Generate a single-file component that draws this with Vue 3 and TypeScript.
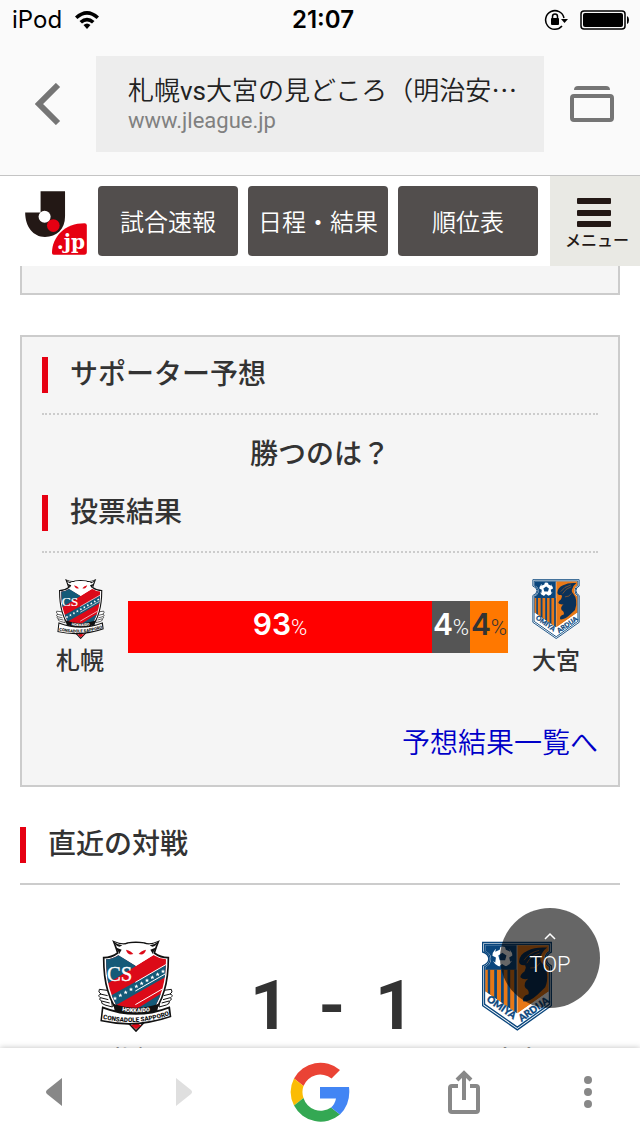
<script setup lang="ts">
interface Share {
  key: string
  value: number
  span: number
}

const navItems: string[] = ['試合速報', '日程・結果', '順位表']

const shares: Share[] = [
  { key: 'home', value: 93, span: 80 },
  { key: 'draw', value: 4, span: 10 },
  { key: 'away', value: 4, span: 10 },
]

const stars: number[] = [0, 1, 2, 3, 4, 5, 6, 7, 8, 9]
</script>

<template>
  <div class="screen" lang="ja">
    <header class="browser">
      <div class="status">
        <div class="carrier">
          <span>iPod</span>
          <svg width="26" height="20" viewBox="0 0 26 20" aria-hidden="true">
            <path d="M1 6.500 Q13 -4.500 25 6.500 L22.600 9 Q13 0.500 3.400 9Z M5.500 11 Q13 4.500 20.500 11 L18 13.500 Q13 9.500 8 13.500Z M9.500 15 Q13 12 16.500 15 L13 19Z" />
          </svg>
        </div>
        <time>21:07</time>
        <div class="indicators">
          <svg width="24" height="22" viewBox="0 0 24 22" aria-hidden="true">
            <path d="M20 9 A9.300 9.300 0 1 0 18 17" fill="none" stroke="#000" stroke-width="1.500" />
            <path d="M17 10 H24 L20.500 14Z" />
            <rect x="7" y="9" width="8" height="7" rx="1" />
            <path d="M8.500 10 V7.500 a2.500 2.500 0 0 1 5 0 V10" fill="none" stroke="#000" stroke-width="1.500" />
          </svg>
          <svg width="50" height="20" viewBox="0 0 50 20" aria-hidden="true">
            <rect x="1" y="1" width="44" height="18" rx="3" fill="none" stroke="#000" stroke-width="1.500" />
            <rect x="3" y="3" width="40" height="14" rx="2" />
            <path d="M47 6 Q49 7 49 10 Q49 13 47 14Z" />
          </svg>
        </div>
      </div>
      <div class="toolbar">
        <button type="button" class="plain" aria-label="戻る">
          <svg width="26" height="42" viewBox="0 0 26 42"><path d="M23 2 L4 21 L23 40" fill="none" stroke="#757575" stroke-width="6" /></svg>
        </button>
        <button type="button" class="address">
          <span class="page-title">札幌<span class="latin">vs</span>大宮の見どころ（明治安<span class="more">…</span></span>
          <span class="host">www.jleague.jp</span>
        </button>
        <button type="button" class="plain" aria-label="タブ一覧">
          <svg width="44" height="36" viewBox="0 0 44 36"><path d="M4 4 Q4 0 8 0 H36 Q40 0 40 4Z" fill="#757575" /><rect x="2" y="10" width="40" height="24" rx="2" fill="none" stroke="#757575" stroke-width="4" /></svg>
        </button>
      </div>
    </header>

    <nav class="site-nav">
      <a href="#" class="logo" aria-label="Jリーグ.jp">
        <svg width="64" height="66" viewBox="73 63 190 197">
          <path d="M122 67 H195 V142 C195 180 170 203 135 203 C100 203 76 172 76 130 H122Z" fill="#231815" />
          <circle cx="160" cy="169" r="19" fill="#e60012" />
          <circle cx="134" cy="143" r="18" fill="#fff" />
          <path d="M156 251 C156 202 195 162 253 162 Q260 162 260 169 V248 Q260 256 252 256 H161 Q156 256 156 251Z" fill="#e60012" stroke="#fff" stroke-width="6" paint-order="stroke" />
          <text x="170" y="239" font-family="DejaVu Serif, serif" font-size="60" font-weight="700" fill="#fff">.jp</text>
        </svg>
      </a>
      <a v-for="item in navItems" :key="item" href="#" class="nav-button">{{ item }}</a>
      <button type="button" class="menu">
        <svg width="36" height="30" viewBox="0 0 36 30" aria-hidden="true">
          <g fill="#231815"><rect x="0" y="0" width="34" height="6" rx="1" /><rect x="0" y="12" width="34" height="6" rx="1" /><rect x="0" y="23" width="34" height="6" rx="1" /></g>
        </svg>
        <span>メニュー</span>
      </button>
    </nav>

    <main class="content">
      <div class="panel panel-end"></div>
      <section class="panel prediction">
        <h2 class="heading">サポーター予想</h2>
        <p class="question">勝つのは？</p>
        <h2 class="heading">投票結果</h2>
        <div class="vote">
          <div class="side">
            <svg class="crest-small sapporo" viewBox="52 61 224 276" role="img" aria-label="札幌">
              <g id="crest-sapporo">
                <g fill="#fff" stroke="#111" stroke-width="3" stroke-linejoin="round">
                  <path d="M80 212 L57 209 Q52 218 62 223 Q50 226 60 234 Q54 240 64 244 Q60 252 74 256 L96 262 L90 214Z" />
                  <path d="M250 212 L273 209 Q279 218 269 223 Q281 226 271 234 Q277 240 267 244 Q270 252 258 256 L236 262 L242 214Z" />
                  <path d="M60 223 L82 228 M60 234 L84 240 M64 244 L88 250 M270 223 L250 228 M270 234 L248 240 M266 244 L244 250" fill="none" />
                </g>
                <path d="M70 114 Q94 114 112 100 L107 84 L100 66 Q128 78 142 70 Q166 66 192 70 Q208 78 234 66 L227 84 L222 100 Q240 114 264 114 Q264 172 252 212 Q238 262 210 288 L167 334 L126 290 Q96 262 82 212 Q70 172 70 114Z" fill="#fff" stroke="#111" stroke-width="5" />
                <clipPath id="sapporo-shield">
                  <path d="M77 119 Q98 118 115 106 L167 139 L219 106 Q238 118 257 119 Q257 170 246 208 Q232 258 205 284 L167 326 L130 286 Q102 258 88 208 Q77 170 77 119Z" />
                </clipPath>
                <g clip-path="url(#sapporo-shield)">
                  <path d="M70 90 H270 V340 H70Z" fill="#dc0a18" />
                  <path d="M70 90 H140 L167 139 L70 199Z" fill="#145a78" />
                  <path d="M70 240 L270 129 V164 L96 263Z" fill="#145a78" />
                  <path d="M150 280 L270 204 V300 H180Z" fill="#145a78" />
                  <path d="M165 188 L270 127 M165 214 L270 154 M165 255 L270 194" stroke="#fff" stroke-width="3" fill="none" />
                </g>
                <g fill="#fff">
                  <path v-for="n in stars" :key="n" :transform="`translate(${104 + n * 16} ${236 - n * 9})`" d="M0 -6 L2 -2 L6 -2 L3 1 L4 6 L0 3 L-4 6 L-3 1 L-6 -2 L-2 -2Z" />
                </g>
                <path d="M102 67 L119 82 L109 84 L123 93 Q116 98 115 107 L167 138 L219 107 Q218 98 211 93 L225 84 L215 82 L232 67 Q206 79 192 72 Q167 68 142 72 Q128 79 102 67Z" fill="#fff" />
                <path d="M101 66 Q112 76 126 77 L118 81 Q106 79 101 66Z M233 66 Q222 76 208 77 L216 81 Q228 79 233 66Z M103 82 L124 90 L116 104 Q117 96 103 82Z M231 82 L210 90 L218 104 Q217 96 231 82Z" fill="#111" />
                <path d="M137 90 Q153 94 159 103 Q142 109 137 90Z M197 90 Q181 94 175 103 Q192 109 197 90Z" fill="#dc0a18" />
                <path d="M151 316 L184 316 L167 329Z" fill="#dc0a18" />
                <text x="80" y="185" font-family="Liberation Serif, serif" font-size="62" fill="#fff" stroke="#fff" stroke-width="1">CS</text>
                <path d="M99 252 Q167 276 235 252 L231 273 Q167 294 103 273Z" fill="#111" />
                <path id="sapporo-upper" d="M104 269 Q167 287 230 269" fill="none" />
                <text font-family="Roboto, sans-serif" font-size="17" font-weight="900" fill="#fff" text-anchor="middle"><textPath href="#sapporo-upper" startOffset="50%">HOKKAIDO</textPath></text>
                <path d="M65 260 Q167 300 269 260 L273 292 Q167 330 60 305Z" fill="#111" />
                <path d="M69 267 Q167 304 264 267 L268 289 Q167 323 65 301Z" fill="#fff" />
                <path id="sapporo-lower" d="M66 297 Q167 322 269 286" fill="none" />
                <text font-family="Roboto, sans-serif" font-size="19" font-weight="900" fill="#111" text-anchor="middle"><textPath href="#sapporo-lower" startOffset="50%">CONSADOLE SAPPORO</textPath></text>
              </g>
            </svg>
            <span>札幌</span>
          </div>
          <div class="bar">
            <div v-for="share in shares" :key="share.key" :class="['share', share.key]" :style="{ width: share.span + '%' }">
              <b>{{ share.value }}</b><small>%</small>
            </div>
          </div>
          <div class="side">
            <svg class="crest-small omiya" viewBox="68 133 206 262" role="img" aria-label="大宮">
              <g id="crest-omiya">
                <path d="M70 136 H272 V164 Q258 170 258 184 Q258 198 272 205 V322 L172 393 L70 322 V205 Q88 198 88 184 Q88 170 70 164Z" fill="#fff" stroke="#0a467d" stroke-width="4" />
                <path d="M76 142 H266 V162 Q254 169 254 184 Q254 200 266 207 V318 L172 385 L76 318 V207 Q92 200 92 184 Q92 169 76 162Z" fill="#fff" stroke="#0a467d" stroke-width="4" />
                <path d="M78 144 H170 V345 L78 280 V209 Q95 200 95 184 Q95 169 78 161Z" fill="#0a467d" />
                <path d="M172 144 H264 V161 Q251 169 251 184 Q251 200 264 209 V280 L172 345Z" fill="#e87817" />
                <path d="M78 216 H170 V345 L78 280Z" fill="#e87817" />
                <path d="M85 216 h7 v74 l-7 -5Z M104 216 h8 v88 l-8 -6Z M124 216 h8 v102 l-8 -6Z M143 216 h8 v116 l-8 -6Z M163 216 h7 v129 l-7 -5Z" fill="#0a467d" />
                <path d="M260 151 Q226 148 202 160 Q178 170 177 192 Q178 205 195 203 L197 210 L193 221 Q180 230 181 238 Q188 246 204 243 Q188 256 196 270 Q208 277 205 288 Q185 293 189 309 Q207 312 232 289 L254 268 Q262 250 259 227 Q256 208 247 199 Q238 191 240 181 Q243 164 260 151Z" fill="#0a3159" />
                <path d="M192 188 Q206 166 236 159 M200 197 Q212 174 238 167 M210 211 Q230 212 238 196" fill="none" stroke="#e87817" stroke-width="2" />
                <circle cx="128" cy="178" r="30" fill="#fff" />
                <path d="M128 166 L140 174 L136 188 L120 188 L116 174Z M110 149 L123 146 L120 157 L107 163Z M135 146 L148 152 L151 163 L138 157Z M160 173 L161 187 L151 193 L148 180Z M140 207 L129 212 L119 206 L127 199Z M97 174 L109 180 L107 195 L96 188Z" fill="#0a467d" />
                <path d="M78 280 L172 345 L264 280 V315 L172 380 L78 315Z" fill="#fff" />
                <g font-family="Lato, sans-serif" font-size="29" font-weight="900" fill="#0a467d" stroke="#0a467d" stroke-width="1">
                  <text transform="translate(80 307) rotate(35)">OMIYA</text>
                  <text transform="translate(184 370) rotate(-35)">ARDIJA</text>
                </g>
              </g>
            </svg>
            <span>大宮</span>
          </div>
        </div>
        <a href="#" class="list-link">予想結果一覧へ</a>
      </section>

      <section class="recent">
        <h2 class="heading">直近の対戦</h2>
        <div class="match">
          <div class="club">
            <svg class="crest-large sapporo" viewBox="52 61 224 276" role="img" aria-label="札幌"><use href="#crest-sapporo" /></svg>
            <span>札幌</span>
          </div>
          <div class="score"><span>1</span><span>-</span><span>1</span></div>
          <div class="club">
            <svg class="crest-large omiya" viewBox="68 133 206 262" role="img" aria-label="大宮"><use href="#crest-omiya" /></svg>
            <span>大宮</span>
          </div>
        </div>
      </section>

      <a href="#" class="to-top">
        <svg width="12" height="8" viewBox="0 0 12 8" aria-hidden="true"><path d="M1 7 L6 2 L11 7" fill="none" stroke="#fff" stroke-width="1.500" /></svg>
        <span>TOP</span>
      </a>
    </main>

    <footer class="bottom">
      <button type="button" class="plain" aria-label="前のページ">
        <svg width="16" height="28" viewBox="0 0 16 28"><path d="M16 0 V28 L1 16 Q-1 14 1 12Z" fill="#888" /></svg>
      </button>
      <button type="button" class="plain" aria-label="次のページ" disabled>
        <svg width="16" height="28" viewBox="0 0 16 28"><path d="M0 0 V28 L15 16 Q17 14 15 12Z" fill="#dfdfdf" /></svg>
      </button>
      <button type="button" class="plain" aria-label="Google">
        <svg width="60" height="60" viewBox="0 0 60 60">
          <path d="M4 16.500 A30 30 0 0 1 50 8 L41.500 16.500 A18 18 0 0 0 13.500 24Z" fill="#ea4335" />
          <path d="M4 16.500 L13.500 24 A18 18 0 0 0 13.500 36 L4 43.500 A30 30 0 0 1 4 16.500Z" fill="#fbbc05" />
          <path d="M4 43.500 L13.500 36 A18 18 0 0 0 41 45.500 L50 52.500 A30 30 0 0 1 4 43.500Z" fill="#34a853" />
          <path d="M30 25 H59 Q61 42 50 52.500 L41 45.500 Q45 42 46 36.500 H30Z" fill="#4285f4" />
        </svg>
      </button>
      <button type="button" class="plain" aria-label="共有">
        <svg width="32" height="44" viewBox="0 0 32 44"><path d="M10 16 H4 Q2 16 2 18 V40 Q2 42 4 42 H28 Q30 42 30 40 V18 Q30 16 28 16 H22 M16 30 V4 M9 10 L16 3 L23 10" fill="none" stroke="#888" stroke-width="4" /></svg>
      </button>
      <button type="button" class="plain" aria-label="メニュー">
        <svg width="8" height="32" viewBox="0 0 8 32"><g fill="#888"><circle cx="4" cy="4" r="4" /><circle cx="4" cy="16" r="4" /><circle cx="4" cy="28" r="4" /></g></svg>
      </button>
    </footer>
  </div>
</template>

<style>
body {
  margin: 0;
  background: #fff;
}
</style>

<style scoped>
.screen {
  display: flex;
  flex-direction: column;
  height: 100vh;
  overflow: hidden;
  background: #fff;
  color: #333;
  font-family: Roboto, "Noto Sans CJK JP", sans-serif;
}
.screen * {
  box-sizing: border-box;
}
svg {
  display: block;
  flex: none;
}
a {
  color: inherit;
  text-decoration: none;
}
button {
  margin: 0;
  padding: 0;
  border: 0;
  background: none;
  color: inherit;
  font: inherit;
}
.plain {
  display: flex;
  align-items: center;
  justify-content: center;
}

.browser {
  flex: none;
  background: #fafafa;
  border-bottom: 1px solid #c4c4c4;
  color: #000;
}
.status {
  display: grid;
  grid-template-columns: 1fr auto 1fr;
  align-items: center;
  height: 40px;
  padding: 0 6px 0 12px;
  font: 400 24px/40px Inter, sans-serif;
}
.status time {
  font-weight: 600;
}
.carrier,
.indicators {
  display: flex;
  align-items: center;
  gap: 12px;
}
.indicators {
  justify-content: flex-end;
  padding-right: 4px;
}
.toolbar {
  display: grid;
  grid-template-columns: 96px 1fr 96px;
  padding: 16px 0 23px;
}
.address {
  display: flex;
  flex-direction: column;
  min-width: 0;
  height: 96px;
  padding: 16px 24px 0 32px;
  background: #ededed;
  text-align: left;
}
.page-title {
  overflow: hidden;
  color: #222;
  font-size: 26px;
  font-weight: 350;
  line-height: 34px;
  white-space: nowrap;
}
.latin {
  font-weight: 400;
}
.more {
  font-family: "Noto Sans CJK JP", sans-serif;
}
.host {
  color: #808080;
  font-size: 22px;
  line-height: 26px;
}

.site-nav {
  display: flex;
  flex: none;
  align-items: center;
  gap: 10px;
  height: 90px;
  padding-left: 24px;
  background: #fff;
}
.logo {
  flex: none;
  padding-top: 4px;
}
.nav-button {
  flex: 1;
  height: 70px;
  border-radius: 4px;
  background: #524e4d;
  color: #fff;
  font: 350 24px/70px "Noto Sans CJK JP", sans-serif;
  text-align: center;
  white-space: nowrap;
}
.menu {
  display: flex;
  flex: none;
  flex-direction: column;
  align-items: center;
  width: 90px;
  height: 90px;
  margin-left: 2px;
  padding-top: 22px;
  background: #e9e9e4;
  color: #231815;
  font: 500 16px/22px "Noto Sans CJK JP", sans-serif;
}
.menu span {
  padding-left: 4px;
}

.content {
  position: relative;
  flex: 1;
  min-height: 0;
  padding: 0 20px;
  overflow: hidden;
}
.panel {
  border: 2px solid #ccc;
  background: #f5f5f5;
}
.panel-end {
  height: 29px;
  margin-bottom: 40px;
  border-top: 0;
}
.prediction {
  padding: 20px;
}
.heading {
  display: flex;
  align-items: center;
  height: 58px;
  margin: 0;
  padding-bottom: 20px;
  border-bottom: 2px dotted #ccc;
  font-size: 28px;
  font-weight: 500;
  line-height: 36px;
}
.heading::before {
  width: 6px;
  height: 36px;
  margin-right: 22px;
  background: #e60012;
  content: "";
}
.question {
  margin: 0;
  padding: 20px 0;
  font-size: 28px;
  font-weight: 500;
  line-height: 40px;
  text-align: center;
}
.vote {
  display: flex;
  gap: 10px;
  padding: 26px 4px 44px 0;
}
.side {
  display: flex;
  flex: none;
  flex-direction: column;
  align-items: center;
  width: 76px;
  font-size: 24px;
  font-weight: 500;
  line-height: 36px;
}
.side span {
  margin-top: 4px;
}
.crest-small {
  height: 60px;
}
.crest-small.sapporo {
  width: 50px;
}
.crest-small.omiya {
  width: 48px;
}
.bar {
  display: flex;
  flex: 1;
  height: 52px;
  margin-top: 22px;
}
.share {
  display: flex;
  align-items: baseline;
  justify-content: center;
  color: #fff;
  line-height: 46px;
}
.share b {
  font: 600 30px/46px Inter, sans-serif;
}
.share small {
  font-size: 22px;
  font-weight: 300;
}
.home {
  background: #f00;
}
.draw {
  background: #555;
}
.away {
  background: #ff7800;
  color: #333;
}
.list-link {
  display: block;
  color: #0000c8;
  font-size: 28px;
  font-weight: 350;
  line-height: 42px;
  text-align: right;
}
.recent {
  padding-top: 40px;
}
.recent .heading {
  border-bottom-style: solid;
}
.match {
  display: grid;
  grid-template-columns: 230fr 164fr 206fr;
  padding-top: 55px;
}
.club {
  display: flex;
  flex-direction: column;
  align-items: center;
  gap: 10px;
  font-size: 24px;
  font-weight: 500;
  line-height: 36px;
}
.crest-large {
  height: 92px;
}
.crest-large.sapporo {
  width: 76px;
}
.crest-large.omiya {
  width: 70px;
}
.score {
  display: flex;
  justify-content: space-between;
  padding-top: 26px;
  font: 700 68px/80px Roboto, sans-serif;
}
.to-top {
  position: absolute;
  right: 40px;
  bottom: 40px;
  display: flex;
  flex-direction: column;
  align-items: center;
  gap: 12px;
  width: 100px;
  height: 100px;
  padding-top: 24px;
  border-radius: 50%;
  background: rgba(0, 0, 0, 0.6);
  color: #fff;
  font: 300 22px/26px Roboto, sans-serif;
}
.bottom {
  z-index: 1;
  display: grid;
  flex: none;
  grid-template-columns: 108fr 152fr 120fr 168fr 80fr;
  height: 88px;
  padding-right: 12px;
  background: #fff;
  box-shadow: 0 0 6px rgba(0, 0, 0, 0.25);
}
</style>
